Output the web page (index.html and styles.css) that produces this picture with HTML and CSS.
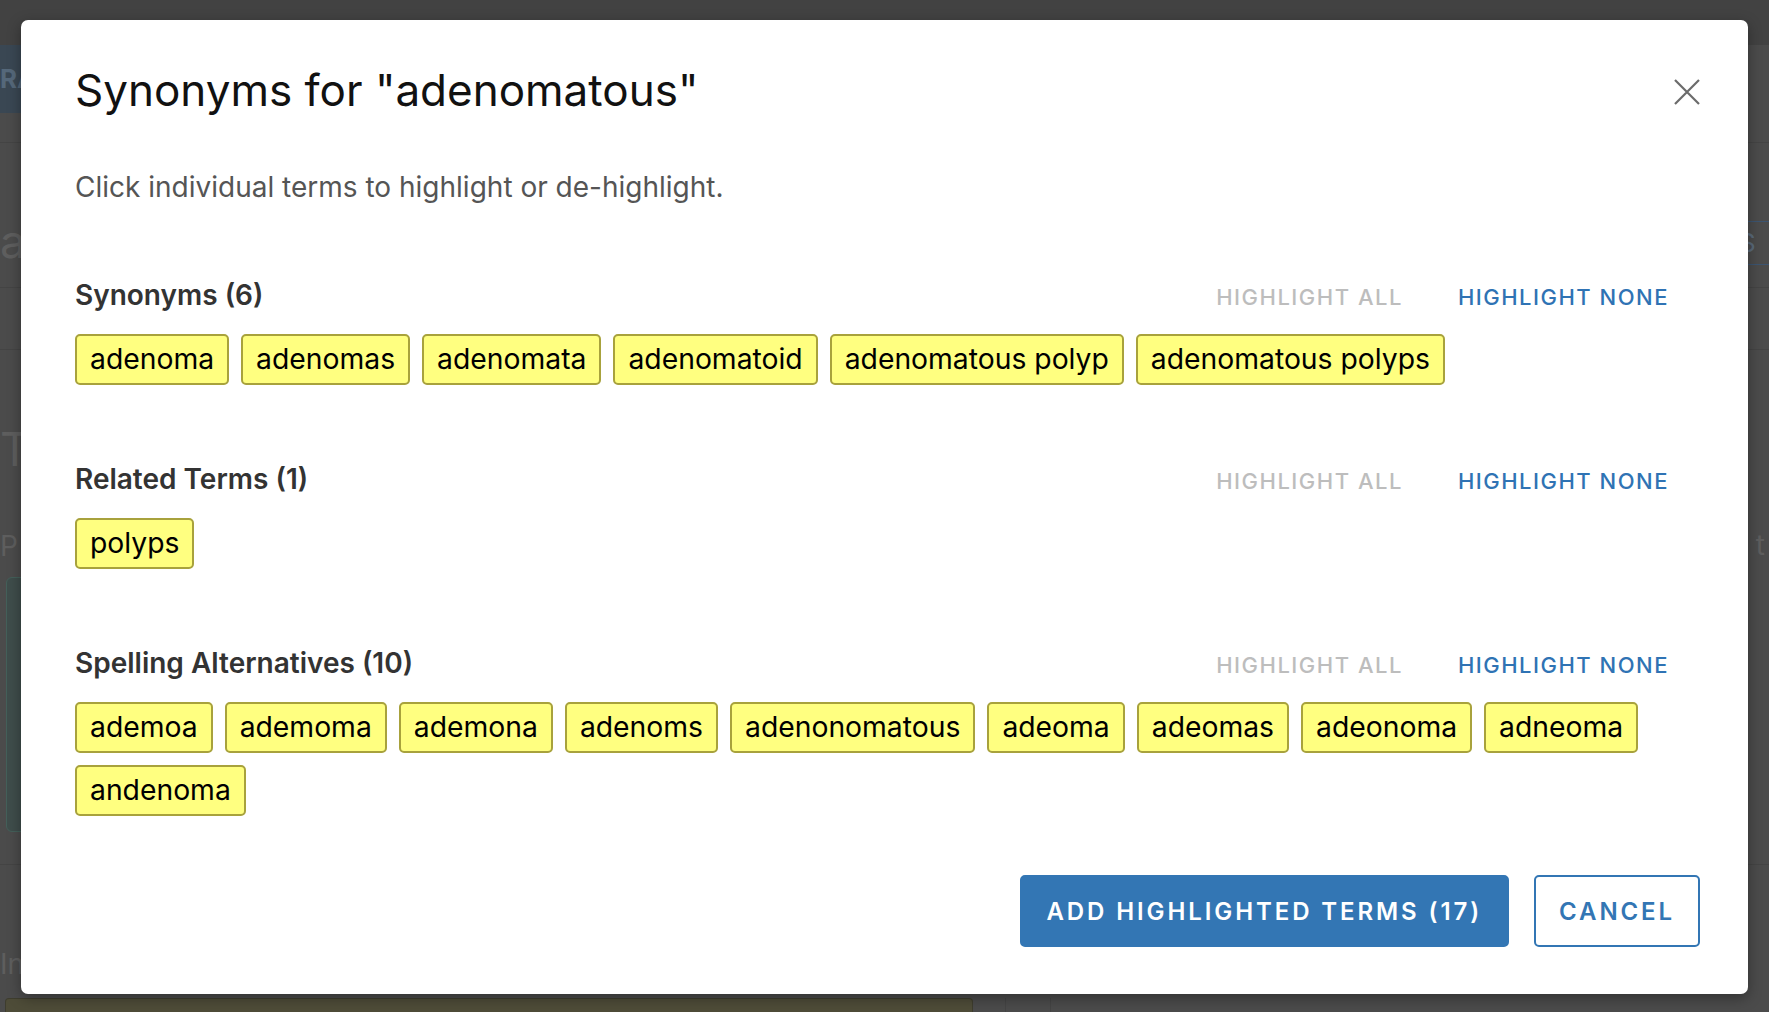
FILE: index.html
```html
<!DOCTYPE html>
<html>
<head>
  <title>Synonyms</title>
  <link rel="stylesheet" href="styles.css">
</head>
<body>
  <div class="page">
    <div class="page-top"></div>
    <div class="page-nav"><span class="nav-tab">RA</span></div>
    <div class="page-row r1"></div>
    <div class="page-row r2">
      <span class="page-big">a</span>
      <span class="page-search">S</span>
    </div>
    <div class="page-row r3"></div>
    <div class="page-row r4">
      <div class="page-col">
        <span class="page-big">T</span>
        <span class="page-small">P</span>
      </div>
      <span class="page-small right">t</span>
    </div>
    <div class="page-panel"></div>
    <div class="page-row r5"></div>
    <div class="page-row r6"><span class="page-small">In</span></div>
    <div class="page-bottom">
      <div class="olive-bar"></div>
      <div class="bottom-cell"></div>
    </div>
  </div>

  <div class="modal">
    <div class="modal-header">
      <h1>Synonyms for "adenomatous"</h1>
      <button class="close" aria-label="Close">
        <svg width="26" height="26" viewBox="0 0 26 26">
          <path d="M1 1 L25 25 M25 1 L1 25" stroke="#6b6b6b" stroke-width="2.2" fill="none"/>
        </svg>
      </button>
    </div>
    <p class="hint">Click individual terms to highlight or de-highlight.</p>

    <div class="section">
      <div class="section-head">
        <h2>Synonyms (6)</h2>
        <div class="links">
          <a class="link muted">HIGHLIGHT ALL</a>
          <a class="link">HIGHLIGHT NONE</a>
        </div>
      </div>
      <div class="chips">
        <span class="chip">adenoma</span>
        <span class="chip">adenomas</span>
        <span class="chip">adenomata</span>
        <span class="chip">adenomatoid</span>
        <span class="chip">adenomatous polyp</span>
        <span class="chip">adenomatous polyps</span>
      </div>
    </div>

    <div class="section">
      <div class="section-head">
        <h2>Related Terms (1)</h2>
        <div class="links">
          <a class="link muted">HIGHLIGHT ALL</a>
          <a class="link">HIGHLIGHT NONE</a>
        </div>
      </div>
      <div class="chips">
        <span class="chip">polyps</span>
      </div>
    </div>

    <div class="section">
      <div class="section-head">
        <h2>Spelling Alternatives (10)</h2>
        <div class="links">
          <a class="link muted">HIGHLIGHT ALL</a>
          <a class="link">HIGHLIGHT NONE</a>
        </div>
      </div>
      <div class="chips">
        <span class="chip">ademoa</span>
        <span class="chip">ademoma</span>
        <span class="chip">ademona</span>
        <span class="chip">adenoms</span>
        <span class="chip">adenonomatous</span>
        <span class="chip">adeoma</span>
        <span class="chip">adeomas</span>
        <span class="chip">adeonoma</span>
        <span class="chip">adneoma</span>
        <span class="chip">andenoma</span>
      </div>
    </div>

    <div class="actions">
      <button class="btn primary">ADD HIGHLIGHTED TERMS (17)</button>
      <button class="btn outline">CANCEL</button>
    </div>
  </div>
</body>
</html>
```

FILE: styles.css
```css
body {
  margin: 0;
  font-family: Inter, "Liberation Sans", sans-serif;
  background-color: #4b4b4b;
  height: 1012px;
  overflow: hidden;
}

/* dimmed page behind the dialog */
.page {
  display: flex;
  flex-direction: column;
  height: 100%;
}
.page-top {
  height: 45px;
  background-color: #424242;
}
.page-nav {
  height: 68px;
  display: flex;
  align-items: center;
}
.nav-tab {
  background-color: #3a4753;
  color: #55687a;
  height: 68px;
  line-height: 68px;
  width: 40px;
  font-weight: 700;
  font-size: 26px;
}
.page-row {
  display: flex;
  justify-content: space-between;
  align-items: flex-start;
  border-bottom: 1px solid #444;
}
.r1 { height: 29px; }
.r2 { height: 144px; }
.r3 { height: 61px; }
.r4 { height: 227px; border-bottom: none; }
.r5 { height: 32px; }
.r6 { height: 131px; border-bottom: none; padding-top: 0; }
.r2 .page-big {
  margin-top: 70px;
}
.r6 .page-small {
  margin-top: 82px;
}
.page-col {
  display: flex;
  flex-direction: column;
  padding-top: 71px;
  gap: 52px;
}
.page-big {
  font-size: 46px;
  line-height: 56px;
  color: #5e5e5e;
}
.page-small {
  font-size: 28px;
  line-height: 34px;
  color: #5e5e5e;
}
.page-small.right {
  margin-top: 178px;
  margin-right: 4px;
}
.page-search {
  width: 30px;
  height: 42px;
  margin-top: 78px;
  border: 1px solid #3c5470;
  border-right: none;
  color: #5a6a7a;
  font-size: 26px;
  line-height: 42px;
  padding-left: 8px;
}
.page-panel {
  height: 255px;
  width: 990px;
  margin-left: 6px;
  box-sizing: border-box;
  background-color: #3f4d4b;
  border: 1px solid #44605a;
  border-radius: 6px;
}
.page-bottom {
  flex: 1;
  display: flex;
  align-items: flex-end;
}
.olive-bar {
  width: 966px;
  height: 13px;
  margin-left: 5px;
  background-color: #4e4c38;
  border: 1px solid #3e3d2e;
  border-bottom: none;
  border-radius: 4px 4px 0 0;
}
.bottom-cell {
  width: 44px;
  height: 14px;
  margin-left: 32px;
  border-left: 1px solid #444;
  border-right: 1px solid #444;
}

/* dialog */
.modal {
  position: absolute;
  top: 20px;
  left: 21px;
  width: 1727px;
  box-sizing: border-box;
  height: 974px;
  padding: 44px 48px 47px 54px;
  background-color: white;
  border-radius: 7px;
  box-shadow: 0 4px 14px rgba(0,0,0,0.35);
  display: flex;
  flex-direction: column;
}
.modal-header {
  display: flex;
  justify-content: space-between;
  align-items: flex-start;
}
h1 {
  margin: 0;
  font-size: 44px;
  line-height: 52px;
  font-weight: 400;
  color: #111;
}
.close {
  background: none;
  border: none;
  padding: 0;
  margin-top: 15px;
  width: 26px;
  height: 26px;
  cursor: pointer;
}
.hint {
  margin: 54px 0 0;
  font-size: 28px;
  line-height: 34px;
  color: #555;
}
.section {
  margin-top: 74px;
}
.section + .section {
  margin-top: 77px;
}
.section-head {
  display: flex;
  justify-content: space-between;
  align-items: baseline;
}
h2 {
  margin: 0;
  font-size: 28px;
  line-height: 34px;
  font-weight: 600;
  color: #333;
}
.links {
  display: flex;
  gap: 55px;
  margin-right: 31px;
}
.link {
  font-size: 22px;
  font-weight: 500;
  letter-spacing: 1.5px;
  color: #2f73b4;
  cursor: pointer;
}
.link.muted {
  color: #bdbdbd;
}
.chips {
  display: flex;
  flex-wrap: wrap;
  gap: 12px 12px;
  margin-top: 22px;
}
.chip {
  background-color: #ffff80;
  border: 2px solid #a8a23c;
  border-radius: 5px;
  padding: 6px 13px;
  font-size: 28.3px;
  line-height: 35px;
  color: #000;
  cursor: pointer;
}
.actions {
  margin-top: auto;
  display: flex;
  justify-content: flex-end;
  gap: 25px;
}
.btn {
  height: 72px;
  border-radius: 5px;
  font-family: Inter, "Liberation Sans", sans-serif;
  font-size: 24px;
  font-weight: 600;
  letter-spacing: 2.9px;
  cursor: pointer;
}
.btn.primary {
  background-color: #3376b4;
  border: 2px solid #3376b4;
  color: white;
  padding: 0 25px;
}
.btn.outline {
  background-color: white;
  border: 2px solid #3376b4;
  color: #3376b4;
  padding: 0 23px;
}
```
